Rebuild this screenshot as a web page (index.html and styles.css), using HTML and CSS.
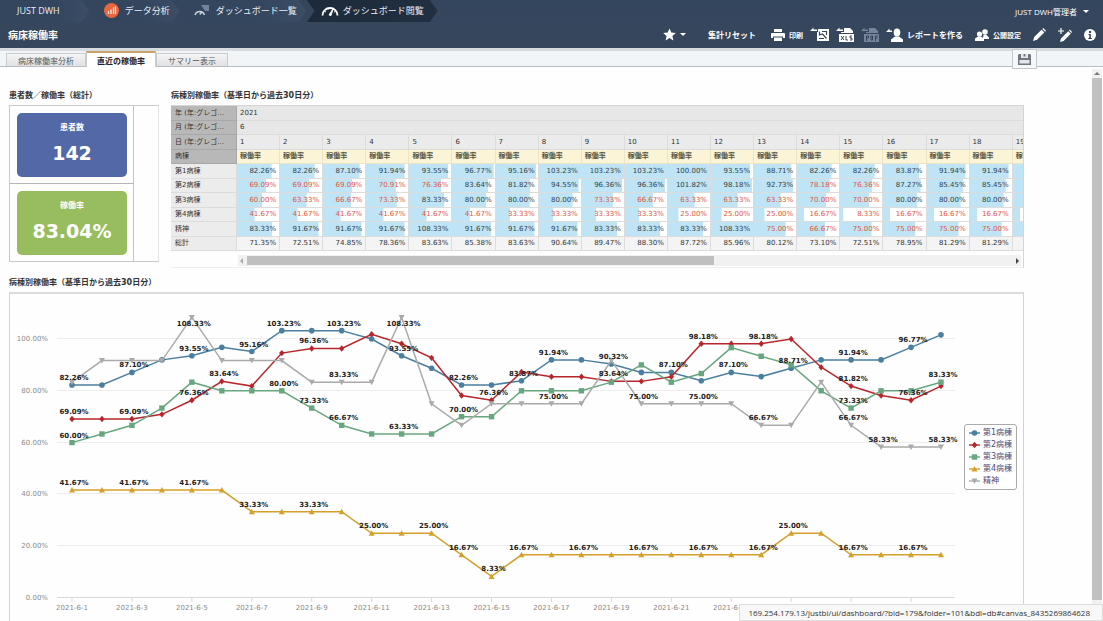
FILE: index.html
```html
<!DOCTYPE html>
<html lang="ja">
<head>
<meta charset="utf-8">
<title>病床稼働率</title>
<link rel="stylesheet" href="styles.css">
</head>
<body>
<header class="top">
  <div class="top-row">
    <nav class="crumbs">
      <a class="crumb" href="#">JUST DWH</a>
      <a class="crumb" href="#"><svg width="15" height="15" viewBox="0 0 15 15"><circle cx="7.5" cy="7.5" r="7.5" fill="#e8673f"/><path d="M4.500 11V8M7 11V6.500M9.500 11V4.500M11.500 11V3.500" stroke="#fbe3da" stroke-width="1.300"/></svg>データ分析</a>
      <a class="crumb" href="#"><svg width="16" height="14" viewBox="0 0 16 14"><path d="M7 2h8v6h-4z" fill="#71839a"/><path d="M1 12a5 5 0 0 1 9.500 0M5.700 11.500l2.500-3" fill="none" stroke="#cbd3dc" stroke-width="1.500"/></svg>ダッシュボード一覧</a>
      <a class="crumb current" href="#" aria-current="page"><svg width="18" height="14" viewBox="0 0 18 14"><path d="M1.500 12.500a7.500 7.500 0 1 1 15 0" fill="none" stroke="#fff" stroke-width="1.800"/><path d="M4 8.500l1 .6M6.500 5.500l.6 1M14 8.500l-1 .6" stroke="#fff"/><path d="M8 12l4-6-2 6.500z" fill="#fff" stroke="#fff"/></svg>ダッシュボード閲覧</a>
    </nav>
    <button class="user">JUST DWH管理者<span class="caret"></span></button>
  </div>
  <div class="title-row">
    <h1>病床稼働率</h1>
    <div class="tools">
      <button class="tool star" aria-label="お気に入り"><svg width="13" height="13" viewBox="0 0 13 13"><path d="M6.500.5l1.800 4.100 4.500.4-3.400 3 1 4.400-3.900-2.300-3.900 2.300 1-4.400L.2 5l4.500-.4z" fill="#fff"/></svg><span class="caret"></span></button>
      <button class="tool reset">集計リセット</button>
      <div class="files">
        <button class="tool small"><svg width="14" height="12" viewBox="0 0 14 12"><path d="M3 0h8v3H3zM1 4h12a1 1 0 0 1 1 1v4h-2V7.500H2V9H0V5a1 1 0 0 1 1-1zM3 8.500h8V12H3z" fill="#fff"/></svg>印刷</button>
        <button class="tool" aria-label="グラフ出力"><svg width="19" height="15" viewBox="0 0 19 15"><path d="M0 4l3.500-3.500V2.500H7V4z" fill="#fff"/><path d="M7 5h1V2h11v12H7z" fill="#fff"/><path d="M9.500 4.500v3.500l3-1 4 4.500M12 4.500h4.500V8M9 11.500h5" fill="none" stroke="#34455c" stroke-width="1.200"/></svg></button>
        <button class="tool" aria-label="XLS出力"><svg width="18" height="15" viewBox="0 0 18 15"><path d="M0 4l3.500-3.500V2.500H7V4z" fill="#fff"/><path d="M8 1h6l3 3v2H5V5h3zM3 7h15v8H3z" fill="#fff"/><path d="M5 9l3 4M8 9l-3 4M10 9v4h2M16 9h-2v2h2v2h-2" fill="none" stroke="#34455c"/></svg></button>
        <button class="tool" aria-label="PDF出力" disabled><svg width="18" height="15" viewBox="0 0 18 15"><path d="M0 4l3.500-3.500V2.500H7V4zM8 1h6l3 3v2H5V5h3zM3 7h15v8H3z" fill="#75849a"/><path d="M5.500 14V9h2v2h-2M10 9v4h1.500V9zM14.500 14V9H17M14.500 11h2" fill="none" stroke="#34455c"/></svg></button>
        <button class="tool"><svg width="17" height="14" viewBox="0 0 17 14"><path d="M0 4l3.500-3.500V2.500H6V4z" fill="#fff"/><ellipse cx="11" cy="4.500" rx="3.300" ry="4" fill="#fff"/><path d="M5 14v-2.500l4-3h4l4 3V14z" fill="#fff"/></svg>レポートを作る</button>
      </div>
      <button class="tool small"><svg width="14" height="12" viewBox="0 0 14 12"><circle cx="10" cy="3" r="2.800" fill="#fff"/><path d="M8 9l.5-3h3L14 8.500V10H8z" fill="#fff"/><circle cx="4.500" cy="5" r="2.600" fill="#fff"/><path d="M0 12v-2.500L3 7.500h3l3 2V12z" fill="#fff"/></svg>公開設定</button>
      <button class="tool" aria-label="編集"><svg width="13" height="13" viewBox="0 0 13 13"><path d="M0 13l1.200-4 7.300-7.300 2.800 2.800L4 11.800zM9.300.9L10.200 0 13 2.800l-.9.9z" fill="#fff"/></svg></button>
      <button class="tool" aria-label="追加編集"><svg width="14" height="14" viewBox="0 0 14 14"><path d="M2 14l1-3.600 7.200-7.200 2.600 2.600L5.600 13zM11 2.400l.9-.9 2.100 2.600-.5.900z" fill="#fff"/><path d="M3 0v6M0 3h6" stroke="#fff" stroke-width="1.200"/></svg></button>
      <button class="tool" aria-label="情報"><svg width="12" height="12" viewBox="0 0 12 12"><circle cx="6" cy="6" r="6" fill="#fff"/><circle cx="6" cy="3" r="1.200" fill="#34455c"/><path d="M4.500 5h2.400v4h1v1H4.300V9h1V6h-.8z" fill="#34455c"/></svg></button>
    </div>
  </div>
</header>
<div class="tabbar">
  <div class="tabs" role="tablist">
    <button class="tab" role="tab" aria-selected="false">病床稼働率分析</button>
    <button class="tab active" role="tab" aria-selected="true">直近の稼働率</button>
    <button class="tab" role="tab" aria-selected="false">サマリー表示</button>
  </div>
  <button class="save" aria-label="保存"><svg width="13" height="11" viewBox="0 0 13 11"><path d="M1 0h11l1 1v10H0V1z" fill="#707780"/><path d="M3 0h7v4H3zM1.500 6h10v3.500h-10z" fill="#e6e8ea"/><path d="M5.500 0h2v2.500h-2z" fill="#707780"/></svg></button>
</div>
<main class="canvas">
  <div class="upper">
    <section class="summary">
      <h2>患者数／稼働率（総計）</h2>
      <div class="kpis">
        <div class="kpi-cell"><div class="kpi patients"><span>患者数</span><strong>142</strong></div></div>
        <div class="kpi-cell"><div class="kpi rate"><span>稼働率</span><strong>83.04%</strong></div></div>
      </div>
    </section>
    <section class="cross">
      <h2>病棟別稼働率（基準日から過去30日分）</h2>
      <div class="grid-box">
        <table id="grid"></table>
        <div class="hscroll"><span class="arrow left"></span><span class="thumb"></span><span class="arrow right"></span></div>
      </div>
    </section>
  </div>
  <section class="trend">
    <h2>病棟別稼働率（基準日から過去30日分）</h2>
    <div class="chart-box">
      <svg id="chart" viewBox="0 0 1013 328" role="img" aria-label="病棟別稼働率の折れ線グラフ"></svg>
      <ul class="legend" id="legend"></ul>
    </div>
  </section>
</main>
<div class="vscroll"><span class="up"></span><span class="vthumb"></span></div>
<div class="status">169.254.179.13/justbi/ui/dashboard/?bid=179&amp;folder=101&amp;bdl=db#canvas_8435269864628</div>
<script src="app.js"></script>
</body>
</html>
```
FILE: styles.css
```css
* { box-sizing: border-box; }

body {
  margin: 0;
  height: 100vh;
  overflow: hidden;
  background: #fefefe;
  color: #333;
  font-family: "DejaVu Sans", "Noto Sans CJK JP", sans-serif;
  font-size: 8px;
}

button {
  margin: 0;
  padding: 0;
  border: 0;
  background: none;
  color: inherit;
  font: inherit;
  white-space: nowrap;
}

svg { flex: none; }

h1, h2 { margin: 0; font-weight: bold; }

/* Header */
.top {
  height: 48px;
  background: linear-gradient(#34455e, #36475c);
  color: #fff;
  font-family: "Open Sans", "Noto Sans CJK JP", sans-serif;
}
.top-row, .title-row { display: flex; justify-content: space-between; }
.top-row { height: 22px; }
.title-row { height: 26px; align-items: center; padding: 0 7px 1px 8px; }
.title-row h1 { font-size: 10px; line-height: 14px; }

.crumbs { display: flex; font-size: 9px; }
.crumb {
  display: flex;
  align-items: center;
  gap: 6px;
  padding: 0 10px 2px 14px;
  color: #e9edf2;
  text-decoration: none;
  white-space: nowrap;
  background: linear-gradient(90deg, #34455e 60%, #3b4e66);
  clip-path: polygon(0 0, calc(100% - 8px) 0, 100% 50%, calc(100% - 8px) 100%, 0 100%, 8px 50%);
}
.crumb:first-child {
  padding: 0 30px 2px 17px;
  clip-path: polygon(0 0, calc(100% - 8px) 0, 100% 50%, calc(100% - 8px) 100%, 0 100%);
}
.crumb.current { gap: 4px; padding-right: 14px; background: linear-gradient(90deg, #1d2a3b, #222f40); }

.user { display: flex; align-items: center; gap: 6px; padding-right: 14px; }
.caret {
  border: 3px solid transparent;
  border-top-color: #fff;
  border-bottom: 0;
}

.tools, .files, .tool { display: flex; align-items: center; }
.tools { gap: 12px; }
.files { gap: 7px; }
.tool { gap: 4px; font-weight: bold; }
.tool.small { font-size: 7px; }
.star { margin-right: 10px; }
.reset { margin-right: 3px; }

/* Tabs */
.tabbar {
  display: flex;
  justify-content: space-between;
  align-items: flex-end;
  height: 19px;
  padding: 0 66px 0 6px;
  border-top: 3px solid #d7dade;
  border-bottom: 1px solid #b9bdc1;
  background: #f2f5f8;
}
.tabs { display: flex; height: 15px; }
.tab {
  padding: 0 11px;
  margin-top: 2px;
  border: 1px solid #c9cccf;
  border-bottom: 0;
  background: linear-gradient(#f5f5f5, #e0e1e3);
  color: #555;
}
.tab.active {
  height: 16px;
  margin-top: 0;
  padding: 0 10px;
  border-top: 2px solid #c9a26b;
  background: #fff;
  color: #222;
  font-weight: bold;
  position: relative;
}
.save {
  display: grid;
  place-items: center;
  width: 25px;
  height: 20px;
  margin-bottom: -3px;
  border: 1px solid #c4c8cc;
  background: #f6f7f8;
  position: relative;
}

/* Dashboard */
.canvas { padding: 22px 79px 0 9px; }
.canvas h2 { font-size: 8px; line-height: 14px; padding-bottom: 2px; white-space: nowrap; }
.upper { display: flex; gap: 12px; }
.summary { flex: none; width: 150px; }
.cross { flex: 1; min-width: 0; }

.kpis {
  border: 1px solid #c9c9c9;
  border-right-color: #e3e3e3;
}
.kpi-cell {
  width: 124px;
  padding: 7px 6px 6px 7px;
  border-right: 1px solid #c4c4c4;
}
.kpi-cell + .kpi-cell { border-top: 1px solid #b5b5b5; }
.kpi {
  display: flex;
  flex-direction: column;
  align-items: center;
  height: 64px;
  padding-top: 8px;
  border-radius: 5px;
  color: #fff;
  line-height: 14px;
}
.kpi span { font-weight: bold; }
.kpi strong { margin-top: 6px; font-size: 19px; line-height: 24px; }
.patients { background: #5368a6; }
.rate { background: #97bd5e; }

.grid-box {
  overflow: hidden;
  height: 163px;
  border: 1px solid #d5d5d5;
  border-left: 0;
  border-bottom-color: #eee;
}
table {
  table-layout: fixed;
  width: 885px;
  border-collapse: separate;
  border-spacing: 0;
  font-size: 7px;
  line-height: 13px;
}
tr { height: 15px; }
tr:nth-child(even) { height: 14px; }
th, td {
  padding: 0 3px;
  border: solid #dcdcdc;
  border-width: 0 1px 1px 0;
  overflow: hidden;
  white-space: nowrap;
  text-align: left;
  font-weight: normal;
}
.head { width: 66px; }
.dim { padding-left: 4px; background: #b8b8b8; border-color: #a8a8a8; }
.span { background: #e7e7e7; }
.day { background: #ebebeb; }
.measure { background: #fbf4d6; border-color: #ece4c4; font-weight: bold; color: #554; }
.ward { padding-left: 4px; background: #ececec; }
.val {
  text-align: right;
  color: #333f4a;
  background: linear-gradient(#bfe4f5, #bfe4f5) 0 0 / var(--v) 100% no-repeat #fff;
}
.low { color: #e0563f; }
.total { background: #f4f4f4; text-align: right; color: #333; }

.hscroll {
  display: flex;
  align-items: center;
  height: 11px;
  margin: 4px 2px 0 67px;
  padding: 0 2px;
  background: #f1f1f1;
}
.thumb { flex: none; width: 60%; height: 9px; margin-left: 4px; background: #bfbfbf; }
.arrow { border: 3px solid transparent; }
.arrow.left { border-right-color: #aaa; border-left: 0; }
.arrow.right { margin-left: auto; border-left-color: #444; border-right: 0; }

.trend { padding-top: 8px; }
.chart-box {
  position: relative;
  border: 1px solid #d3d3d3;
  border-top: 2px solid #dcdcdc;
}
#chart { display: block; width: 100%; }
.axis { font-size: 7px; fill: #8a8a8a; }
.grid-line { stroke: #ededed; }
.base-line { stroke: #d8d8d8; }
.label { font-size: 7px; font-weight: bold; fill: #222; text-anchor: middle; }
.line { fill: none; stroke-width: 1.5; }

.legend {
  position: absolute;
  right: 6px;
  top: 130px;
  margin: 0;
  padding: 2px 4px;
  border: 1px solid #aaa;
  border-radius: 3px;
  background: #fff;
  list-style: none;
  color: #4d4d7c;
}
.legend li { display: flex; align-items: center; gap: 3px; line-height: 12px; }

/* Window chrome */
.vscroll {
  position: fixed;
  top: 69px;
  right: 1px;
  bottom: 0;
  width: 10px;
  background: #f1f1f1;
}
.up { display: block; width: 6px; margin: 3px auto; border: 3px solid transparent; border-top: 0; border-bottom-color: #777; }
.vthumb { display: block; height: calc(100% - 30px); background: #c1c1c1; }
.status {
  position: fixed;
  right: 0;
  bottom: 0;
  padding: 0 12px 0 8px;
  border: 1px solid #ddd;
  background: #f8f8f8;
  color: #333;
  font: 8px/15px "Open Sans", sans-serif;
}
```
FILE: app.js
```js
const series = [
  { name: "第1病棟", color: "#4a7f9f", mark: "circle",
    data: [82.26, 82.26, 87.10, 91.94, 93.55, 96.77, 95.16, 103.23, 103.23, 103.23, 100, 93.55, 88.71, 82.26, 82.26, 83.87, 91.94, 91.94, 90.32, 87.10, 87.10, 83.87, 87.10, 85.48, 88.71, 91.94, 91.94, 91.94, 96.77, 101.61],
    labels: [1, 3, 5, 7, 8, 10, 12, 14, 16, 17, 19, 21, 23, 25, 27, 29] },
  { name: "第2病棟", color: "#b8262b", mark: "diamond",
    data: [69.09, 69.09, 69.09, 70.91, 76.36, 83.64, 81.82, 94.55, 96.36, 96.36, 101.82, 98.18, 92.73, 78.18, 76.36, 87.27, 85.45, 85.45, 83.64, 83.64, 85.45, 98.18, 98.18, 98.18, 100, 89.09, 81.82, 78.18, 76.36, 81.82],
    labels: [1, 3, 5, 6, 9, 15, 19, 22, 24, 27, 29] },
  { name: "第3病棟", color: "#68a67f", mark: "square",
    data: [60, 63.33, 66.67, 73.33, 83.33, 80, 80, 80, 73.33, 66.67, 63.33, 63.33, 63.33, 70, 70, 80, 80, 80, 83.33, 90, 83.33, 86.67, 96.67, 93.33, 90, 80, 73.33, 80, 80, 83.33],
    labels: [1, 8, 9, 10, 12, 14, 27, 30] },
  { name: "第4病棟", color: "#d3a02a", mark: "up",
    data: [41.67, 41.67, 41.67, 41.67, 41.67, 41.67, 33.33, 33.33, 33.33, 33.33, 25, 25, 25, 16.67, 8.33, 16.67, 16.67, 16.67, 16.67, 16.67, 16.67, 16.67, 16.67, 16.67, 25, 25, 16.67, 16.67, 16.67, 16.67],
    labels: [1, 3, 5, 7, 9, 11, 13, 14, 15, 16, 18, 20, 22, 24, 25, 27, 29] },
  { name: "精神", color: "#aaa", mark: "down",
    data: [83.33, 91.67, 91.67, 91.67, 108.33, 91.67, 91.67, 91.67, 83.33, 83.33, 83.33, 108.33, 75, 66.67, 75, 75, 75, 75, 91.67, 75, 75, 75, 75, 66.67, 66.67, 83.33, 66.67, 58.33, 58.33, 58.33],
    labels: [5, 10, 12, 17, 20, 22, 24, 27, 28, 30] }
];
const totals = [71.35, 72.51, 74.85, 78.36, 83.63, 85.38, 83.63, 90.64, 89.47, 88.30, 87.72, 85.96, 80.12, 73.10, 72.51, 78.95, 81.29, 81.29];
const pct = v => v.toFixed(2) + "%";

// Cross table
const days = Array.from({ length: 19 }, (_, i) => i + 1);
const dim = t => `<th class="head dim" scope="row">${t}</th>`;
document.getElementById("grid").innerHTML = `
  <colgroup><col class="head"><col span="19"></colgroup>
  <thead>
    <tr>${dim("年 (年:グレゴ…")}<th class="span" colspan="19">2021</th></tr>
    <tr>${dim("月 (年:グレゴ…")}<th class="span" colspan="19">6</th></tr>
    <tr>${dim("日 (年:グレゴ…")}${days.map(d => `<th class="day">${d}</th>`).join("")}</tr>
    <tr>${dim("病棟")}${days.map(() => `<th class="measure">稼働率</th>`).join("")}</tr>
  </thead>
  <tbody>${series.map(s => `<tr><th class="ward" scope="row">${s.name}</th>${days.map(d => {
    const v = s.data[d - 1];
    return `<td class="val${v < 80 ? " low" : ""}" style="--v:${Math.min(v, 100)}%">${d < 19 ? pct(v) : ""}</td>`;
  }).join("")}</tr>`).join("")}
    <tr><th class="ward" scope="row">総計</th>${days.map(d => `<td class="total">${d < 19 ? pct(totals[d - 1]) : ""}</td>`).join("")}</tr>
  </tbody>`;

// Line chart
const px = i => 62 + i * 30 - i / 29;
const py = v => 304 - v * 2.59;
function mark(s, x, y) {
  const shapes = {
    circle: `<circle cx="${x}" cy="${y}" r="2.8"`,
    diamond: `<path d="M${x} ${y - 3.2}l2.700 3.200-2.700 3.200-2.700-3.200z"`,
    square: `<path d="M${x - 2.7} ${y - 2.7}h5.400v5.400h-5.400z"`,
    up: `<path d="M${x} ${y - 3}l3 5.500h-6z"`,
    down: `<path d="M${x} ${y + 3}l3-5.500h-6z"`
  };
  return `${shapes[s.mark]} fill="${s.color}"/>`;
}
let out = "";
for (let v = 0; v <= 100; v += 20) {
  out += `<path class="${v ? "grid-line" : "base-line"}" d="M47 ${Math.round(py(v)) - .5}H945"/>`;
  out += `<text class="axis" text-anchor="end" x="38" y="${py(v) + 2}">${pct(v)}</text>`;
}
for (let i = 0; i < 30; i += 2) {
  out += `<path class="base-line" d="M${px(i)} 304v4"/>`;
  out += `<text class="axis" text-anchor="middle" x="${px(i)}" y="316">2021-6-${i + 1}</text>`;
}
series.forEach(s => {
  out += `<polyline class="line" stroke="${s.color}" points="${s.data.map((v, i) => px(i) + "," + py(v)).join(" ")}"/>`;
  out += s.data.map((v, i) => mark(s, px(i), py(v))).join("");
});
series.forEach(s => s.labels.forEach(d => {
  const v = s.data[d - 1];
  out += `<text class="label" x="${px(d - 1) + 2}" y="${py(v) + (v > 105 ? 9 : -5)}">${pct(v)}</text>`;
}));
document.getElementById("chart").innerHTML = out;

document.getElementById("legend").innerHTML = series.map(s =>
  `<li><svg width="11" height="8" viewBox="0 0 11 8"><path d="M0 4h11" stroke="${s.color}" stroke-width="1.400"/>${mark(s, 5.5, 4)}</svg>${s.name}</li>`).join("");
```
